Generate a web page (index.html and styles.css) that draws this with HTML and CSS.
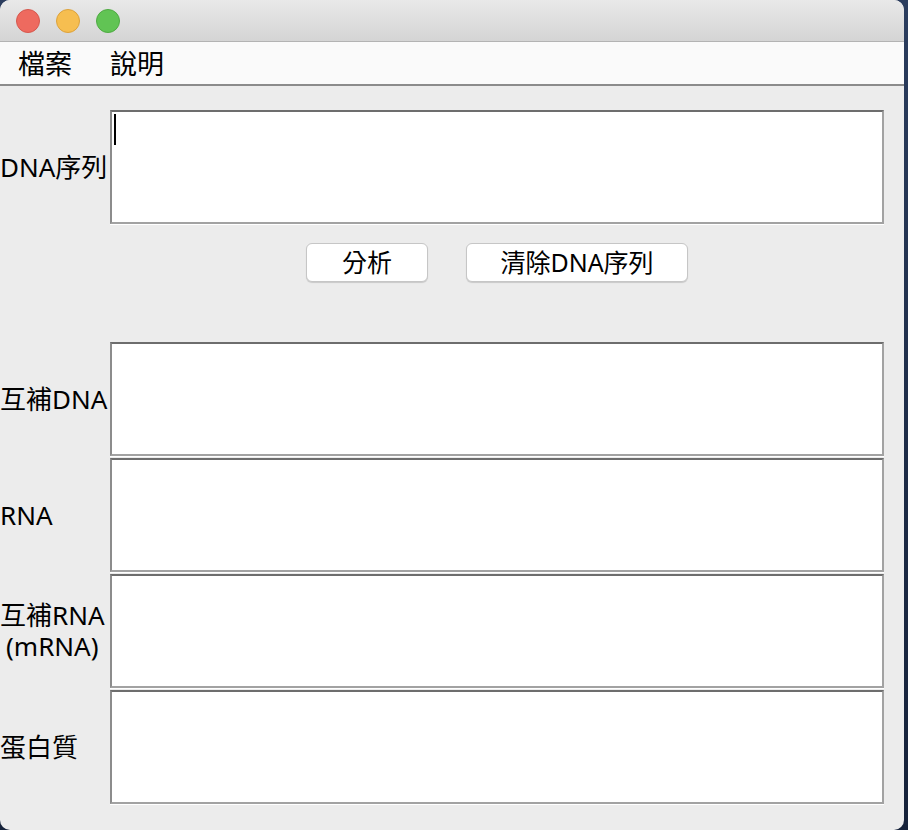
FILE: index.html
```html
<!DOCTYPE html>
<html lang="zh-Hant">
<head>
<meta charset="utf-8">
<title>DNA</title>
<link rel="stylesheet" href="styles.css">
</head>
<body>
<div class="window">
  <div class="titlebar">
    <span class="light red"></span>
    <span class="light yellow"></span>
    <span class="light green"></span>
  </div>
  <div class="menubar">
    <span class="menu-item">檔案</span>
    <span class="menu-item">說明</span>
  </div>
  <div class="content">
    <div class="row">
      <div class="label">DNA序列</div>
      <div class="field"><span class="caret"></span></div>
    </div>
    <div class="actions">
      <button class="btn btn-narrow">分析</button>
      <button class="btn btn-wide">清除DNA序列</button>
    </div>
    <div class="outputs">
      <div class="row">
        <div class="label">互補DNA</div>
        <div class="field"></div>
      </div>
      <div class="row">
        <div class="label">RNA</div>
        <div class="field"></div>
      </div>
      <div class="row">
        <div class="label"><span class="two-line"><span class="line">互補RNA</span><span class="line">(mRNA)</span></span></div>
        <div class="field"></div>
      </div>
      <div class="row">
        <div class="label">蛋白質</div>
        <div class="field"></div>
      </div>
    </div>
  </div>
</div>
</body>
</html>
```

FILE: styles.css
```css
html, body {
  margin: 0;
  padding: 0;
}
body {
  background: linear-gradient(180deg, #2b3d5e 0%, #1c2a45 60%, #16223a 100%);
  width: 908px;
  height: 830px;
  overflow: hidden;
  font-family: "Noto Sans", "Noto Sans CJK TC", sans-serif;
  color: #000;
}
.window {
  width: 904px;
  height: 830px;
  background: #ececec;
  border-radius: 10px;
  overflow: hidden;
  display: flex;
  flex-direction: column;
}
.titlebar {
  height: 41px;
  flex: none;
  background: linear-gradient(180deg, #e9e9e9 0%, #d4d4d4 100%);
  border-bottom: 1px solid #b3b3b3;
  display: flex;
  align-items: center;
  gap: 16px;
  padding-left: 16px;
}
.light {
  width: 24px;
  height: 24px;
  border-radius: 50%;
  box-sizing: border-box;
}
.red { background: #ee6a5f; border: 1px solid #d5584e; }
.yellow { background: #f6be50; border: 1px solid #dca23c; }
.green { background: #61c454; border: 1px solid #4faa43; }
.menubar {
  height: 42px;
  flex: none;
  background: #fafafa;
  border-bottom: 2px solid #8b8b8b;
  display: flex;
  align-items: center;
  gap: 38px;
  padding-left: 18px;
}
.menu-item {
  font-size: 27px;
  line-height: 42px;
  font-family: "Noto Sans CJK TC", sans-serif;
}
.content {
  padding-top: 24px;
  display: flex;
  flex-direction: column;
}
.row {
  display: flex;
  align-items: center;
}
.label {
  width: 110px;
  flex: none;
  font-size: 26px;
  line-height: 31px;
  white-space: nowrap;
}
.two-line {
  display: inline-flex;
  flex-direction: column;
  align-items: center;
}
.line {
  display: block;
  height: 31px;
  line-height: 31px;
}
.field {
  width: 774px;
  height: 114px;
  box-sizing: border-box;
  background: #fff;
  border-style: solid;
  border-width: 2px;
  border-color: #6d6d6d #a2a2a2 #a2a2a2 #8c8c8c;
  box-shadow: 0 1px 0 #fff;
  padding: 2px 0 0 2px;
}
.caret {
  display: block;
  width: 2px;
  height: 31px;
  background: #000;
}
.actions {
  margin-top: 19px;
  margin-left: 110px;
  width: 774px;
  display: flex;
  justify-content: center;
  gap: 38px;
}
.btn {
  height: 39px;
  box-sizing: border-box;
  background: #fff;
  border: 1px solid #c6c6c6;
  border-radius: 6px;
  box-shadow: 0 1px 1px rgba(0, 0, 0, 0.15);
  font-family: "Noto Sans", "Noto Sans CJK TC", sans-serif;
  font-size: 25px;
  line-height: 37px;
  color: #000;
  padding: 0;
  margin: 0;
  text-align: center;
}
.btn-narrow {
  width: 122px;
}
.btn-wide {
  width: 222px;
}
.outputs {
  margin-top: 60px;
  display: flex;
  flex-direction: column;
  gap: 2px;
}
```
